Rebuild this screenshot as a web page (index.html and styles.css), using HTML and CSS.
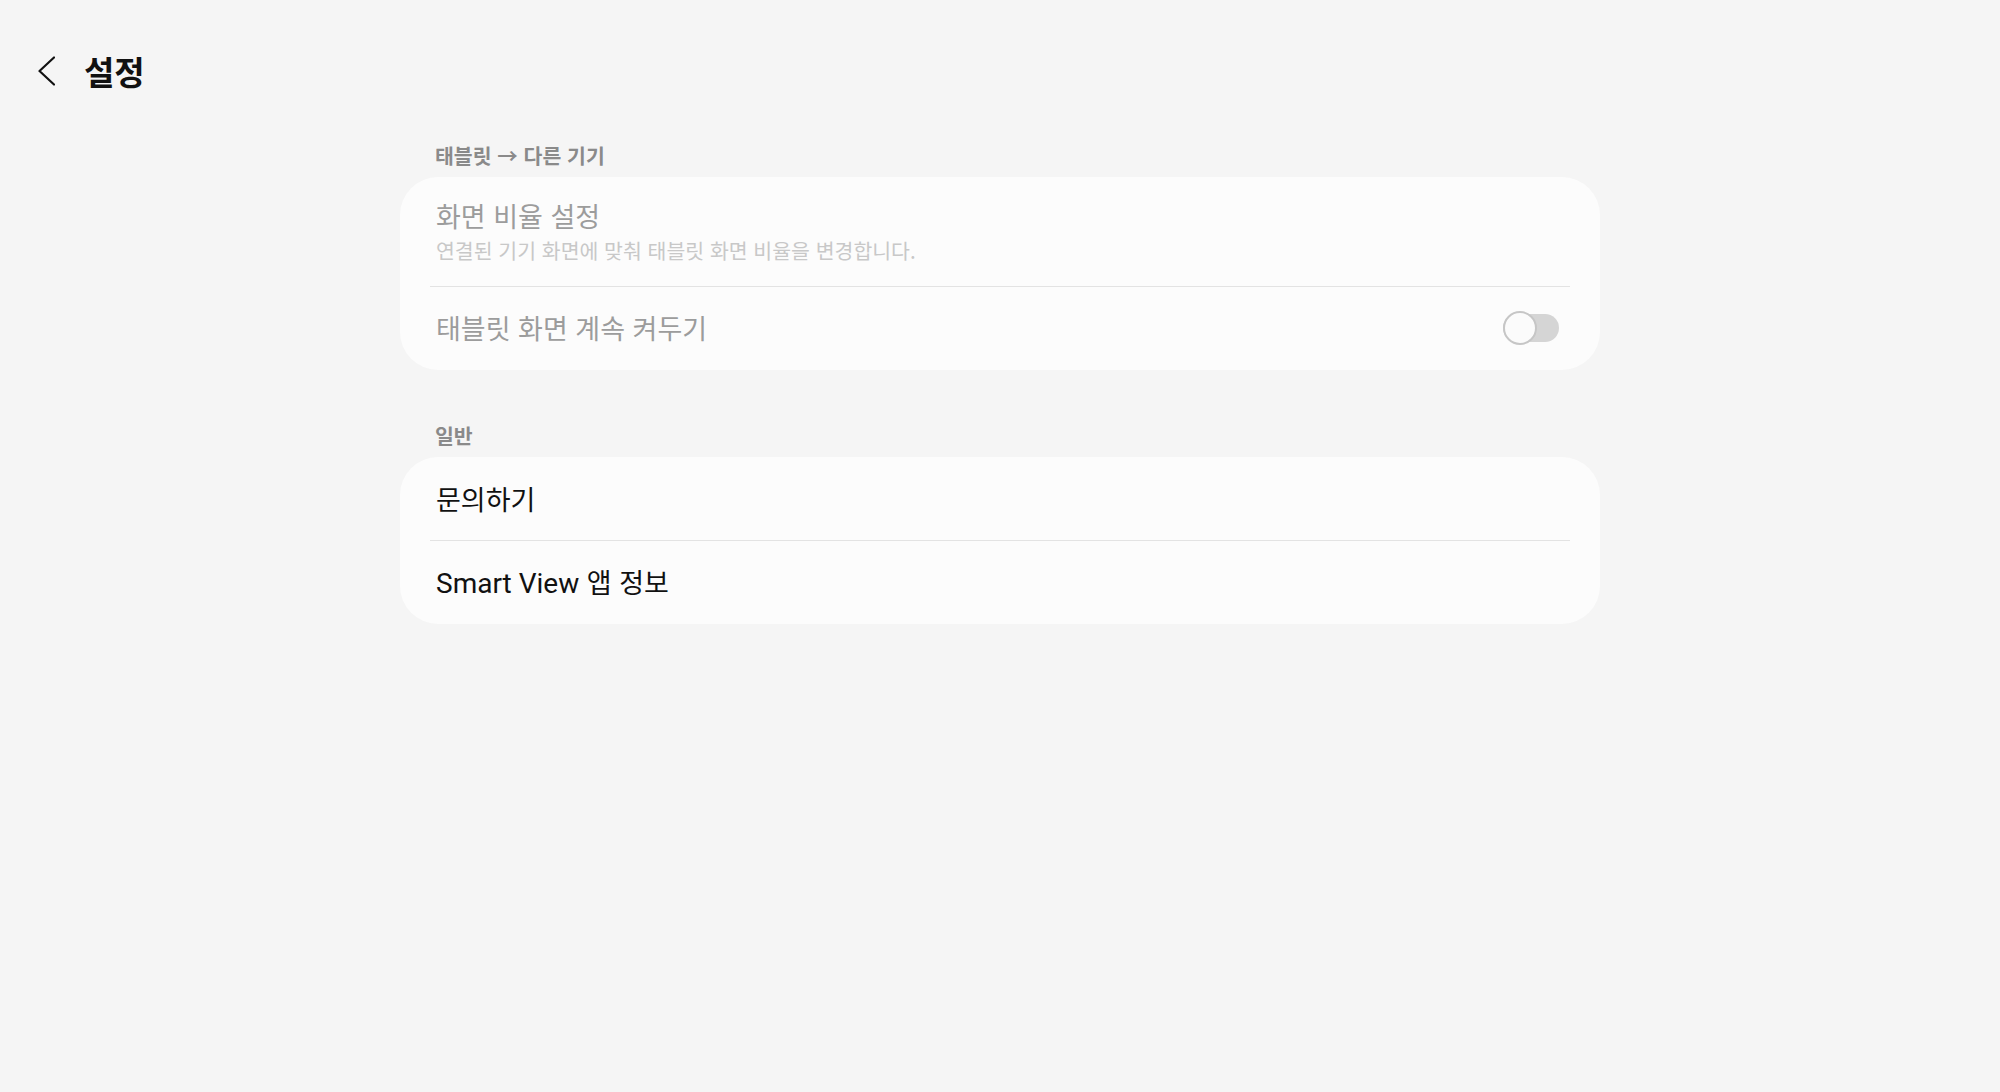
FILE: index.html
```html
<!DOCTYPE html>
<html lang="ko">
<head>
  <meta charset="UTF-8">
  <meta name="viewport" content="width=device-width, initial-scale=1.0">
  <title>설정</title>
  <link rel="stylesheet" href="styles.css">
</head>
<body>
  <div class="topbar">
    <svg class="back" width="20" height="30" viewBox="0 0 20 30">
      <path d="M19 1.5 L4.5 15 L19 28.5" fill="none" stroke="#111" stroke-width="2.2" stroke-linecap="round" stroke-linejoin="round"/>
    </svg>
    <h1>설정</h1>
  </div>

  <div class="content">
    <div class="section first">
      <div class="section-title">태블릿 → 다른 기기</div>
      <div class="card">
        <div class="row row-tall disabled">
          <div class="row-title">화면 비율 설정</div>
          <div class="row-sub">연결된 기기 화면에 맞춰 태블릿 화면 비율을 변경합니다.</div>
        </div>
        <div class="divider"></div>
        <div class="row row-switch disabled">
          <div class="row-title">태블릿 화면 계속 켜두기</div>
          <div class="switch"><span class="knob"></span></div>
        </div>
      </div>
    </div>

    <div class="section">
      <div class="section-title">일반</div>
      <div class="card">
        <div class="row">
          <div class="row-title">문의하기</div>
        </div>
        <div class="divider"></div>
        <div class="row">
          <div class="row-title"><span class="latin">Smart View</span> 앱 정보</div>
        </div>
      </div>
    </div>
  </div>
</body>
</html>
```

FILE: styles.css
```css
body {
  margin: 0;
  background: #f5f5f5;
  font-family: "Noto Sans CJK KR", "Noto Sans", sans-serif;
  color: #111;
}
.topbar {
  display: flex;
  align-items: center;
  height: 62px;
  padding: 40px 0 0 35px;
}
.back {
  display: block;
}
.topbar h1 {
  margin: 0 0 0 29px;
  font-size: 33px;
  font-weight: 700;
  line-height: 42px;
}
.content {
  width: 1200px;
  margin: 0 auto;
}
.section {
  margin-top: 51px;
}
.section.first {
  margin-top: 39px;
}
.section-title {
  font-size: 20.5px;
  font-weight: 700;
  line-height: 28px;
  color: #8a8a8a;
  padding: 0 35px;
  margin-bottom: 8px;
}
.card {
  background: #fcfcfc;
  border-radius: 38px;
}
.divider {
  height: 1px;
  background: #e3e3e3;
  margin: 0 30px;
}
.row {
  display: flex;
  align-items: center;
  height: 83px;
  padding: 0 41px 0 36px;
}
.row-tall {
  display: block;
  height: auto;
  padding-top: 22px;
  padding-bottom: 23px;
}
.row-switch {
  justify-content: space-between;
  height: 82px;
  padding-bottom: 1px;
}
.row-title {
  font-size: 27px;
  line-height: 34px;
}
.latin {
  font-family: Roboto, sans-serif;
  font-size: 28px;
}
.row-sub {
  font-size: 20.5px;
  line-height: 26px;
  margin-top: 4px;
  color: #c8c8c8;
}
.disabled .row-title {
  color: #9c9c9c;
}
.switch {
  position: relative;
  width: 56px;
  height: 28px;
  border-radius: 14px;
  background: #d5d5d5;
}
.knob {
  position: absolute;
  left: 0;
  top: -3px;
  width: 30px;
  height: 30px;
  border-radius: 50%;
  background: #fbfbfb;
  border: 2px solid #c6c6c6;
}
```
